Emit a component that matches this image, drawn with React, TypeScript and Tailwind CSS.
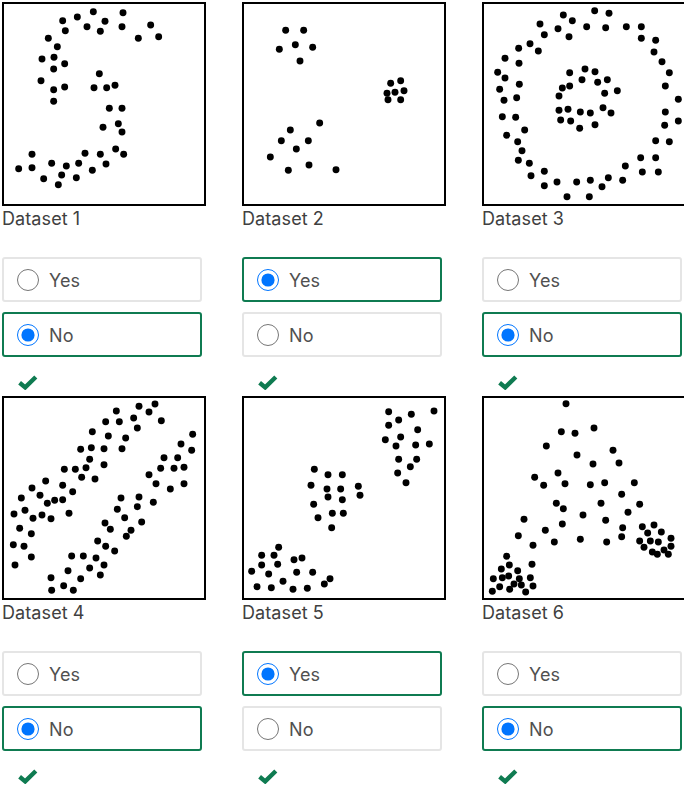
type Dot = [number, number];

// dot positions measured off the reference, in 3x units
const plots: { name: string; viewBox: string; selected: "Yes" | "No"; dots: Dot[] }[] = [
  {
    name: "Dataset 1",
    viewBox: "12 12 600 600",
    selected: "No",
    dots: [
      [280, 35], [369, 38], [232, 51], [188, 62], [315, 64], [261, 80], [366, 80], [452, 75], [196, 92], [301, 94],
      [415, 115], [476, 110], [145, 115], [172, 140], [126, 177], [162, 172], [194, 191], [161, 207], [298, 221], [123, 242],
      [345, 256], [282, 263], [320, 263], [161, 269], [194, 261], [161, 304], [328, 325], [366, 325], [355, 371], [309, 382],
      [366, 396], [347, 447], [371, 463], [96, 463], [255, 460], [301, 463], [155, 490], [236, 490], [199, 498], [318, 492],
      [56, 506], [96, 503], [277, 511], [185, 525], [131, 536], [229, 533], [175, 554],
    ],
  },
  {
    name: "Dataset 2",
    viewBox: "27 12 600 600",
    selected: "Yes",
    dots: [
      [152, 91], [206, 91], [181, 134], [133, 148], [233, 142], [195, 183], [467, 250], [497, 242], [507, 272], [480, 277],
      [456, 280], [459, 299], [497, 299], [254, 369], [166, 390], [139, 422], [220, 422], [184, 447], [106, 471], [222, 495],
      [160, 511], [303, 509],
    ],
  },
  {
    name: "Dataset 3",
    viewBox: "30 12 600 600",
    selected: "No",
    dots: [
      [362, 32], [405, 40], [268, 45], [295, 62], [198, 72], [338, 80], [395, 83], [457, 80], [502, 80], [252, 86],
      [211, 104], [285, 110], [502, 115], [545, 121], [168, 131], [134, 145], [193, 153], [540, 156], [93, 175], [564, 185],
      [135, 190], [71, 217], [93, 234], [586, 218], [136, 253], [574, 258], [77, 268], [128, 293], [90, 301], [613, 298],
      [574, 336], [85, 350], [125, 352], [613, 363], [572, 376], [152, 390], [98, 406], [131, 425], [545, 422], [586, 425],
      [144, 452], [500, 473], [545, 473], [133, 481], [166, 490], [454, 498], [211, 514], [505, 516], [553, 516], [171, 527],
      [403, 533], [349, 541], [446, 541], [249, 546], [308, 546], [211, 557], [384, 560], [279, 590], [346, 590], [333, 207],
      [363, 215], [287, 218], [324, 239], [400, 239], [371, 247], [287, 258], [265, 264], [430, 272], [392, 280], [255, 288],
      [387, 323], [255, 331], [282, 328], [319, 336], [349, 339], [411, 339], [260, 360], [290, 363], [363, 374], [317, 385],
    ],
  },
  {
    name: "Dataset 4",
    viewBox: "12 18 600 600",
    selected: "No",
    dots: [
      [465, 36], [417, 43], [349, 57], [447, 60], [401, 78], [317, 89], [358, 89], [484, 86], [412, 108], [277, 119],
      [578, 127], [325, 132], [377, 138], [543, 156], [242, 172], [274, 167], [312, 170], [366, 170], [575, 175], [492, 197],
      [533, 197], [269, 202], [312, 218], [193, 232], [226, 232], [258, 227], [482, 229], [522, 229], [552, 226], [447, 248],
      [245, 256], [285, 261], [137, 267], [468, 275], [552, 275], [188, 280], [96, 288], [511, 291], [218, 299], [120, 310],
      [64, 318], [164, 325], [188, 323], [363, 318], [417, 315], [460, 331], [142, 334], [75, 355], [352, 352], [412, 344],
      [42, 366], [207, 364], [126, 369], [99, 379], [153, 380], [374, 377], [425, 390], [315, 393], [59, 409], [331, 412],
      [393, 415], [94, 425], [379, 433], [293, 447], [40, 458], [72, 463], [317, 463], [344, 477], [94, 495], [215, 492],
      [250, 492], [288, 498], [45, 519], [312, 519], [269, 528], [204, 536], [301, 549], [153, 557], [242, 560], [191, 581],
      [155, 595], [220, 595],
    ],
  },
  {
    name: "Dataset 5",
    viewBox: "27 18 600 600",
    selected: "Yes",
    dots: [
      [461, 59], [597, 57], [529, 67], [491, 84], [461, 100], [548, 113], [497, 135], [451, 143], [483, 162], [542, 159],
      [583, 156], [491, 202], [545, 202], [526, 224], [488, 243], [513, 272], [238, 232], [279, 248], [322, 248], [228, 280],
      [370, 283], [276, 291], [317, 291], [375, 310], [279, 315], [322, 323], [236, 337], [292, 364], [325, 364], [249, 377],
      [290, 407], [131, 466], [80, 490], [117, 490], [201, 498], [177, 503], [80, 519], [128, 517], [50, 538], [101, 546],
      [185, 541], [233, 541], [285, 560], [144, 568], [268, 576], [66, 584], [109, 587], [174, 592], [217, 589],
    ],
  },
  {
    name: "Dataset 6",
    viewBox: "30 18 600 600",
    selected: "No",
    dots: [
      [276, 35], [360, 108], [262, 119], [303, 124], [217, 162], [417, 175], [309, 189], [357, 216], [435, 213], [252, 243],
      [182, 256], [209, 280], [273, 275], [349, 278], [392, 272], [481, 272], [443, 307], [247, 334], [268, 350], [381, 334],
      [497, 337], [462, 361], [327, 369], [150, 382], [395, 385], [265, 396], [214, 415], [446, 407], [505, 404], [540, 399],
      [521, 423], [562, 420], [133, 431], [443, 434], [319, 442], [241, 450], [398, 450], [497, 447], [529, 447], [553, 450],
      [591, 439], [591, 463], [177, 460], [510, 466], [570, 474], [535, 480], [550, 487], [583, 487], [98, 493], [174, 517],
      [106, 519], [82, 531], [131, 536], [104, 552], [85, 557], [58, 560], [136, 560], [169, 557], [120, 576], [142, 579],
      [177, 582], [77, 584], [107, 592], [55, 598], [155, 600],
    ],
  },
];

function Plot({ viewBox, dots }: { viewBox: string; dots: Dot[] }) {
  return (
    <div className="w-[204px] h-[204px] border-2 border-black bg-white overflow-hidden">
      <svg viewBox={viewBox} className="block w-full h-full">
        {dots.map(([cx, cy], i) => (
          <circle key={i} cx={cx} cy={cy} r="10.4" fill="#000" />
        ))}
      </svg>
    </div>
  );
}

function Option({ label, group, checked }: { label: string; group: string; checked: boolean }) {
  return (
    <label
      className={`flex items-center gap-[10px] w-[200px] h-[45px] pl-[13px] border-2 rounded-[3px] text-[#505050] ${
        checked ? "border-[#0f7b51]" : "border-[#e5e5e5]"
      }`}
    >
      <input type="radio" name={group} defaultChecked={checked} className="w-[22px] h-[22px] m-0 shrink-0" />
      <span className="pt-px">{label}</span>
    </label>
  );
}

function Card({ plot }: { plot: (typeof plots)[number] }) {
  return (
    <div className="w-[240px] h-[394px] shrink-0">
      <Plot viewBox={plot.viewBox} dots={plot.dots} />
      <div className="mt-px h-6 leading-6 text-[#404040]">{plot.name}</div>
      <div className="mt-[26px] flex flex-col gap-[10px]">
        <Option label="Yes" group={plot.name} checked={plot.selected === "Yes"} />
        <Option label="No" group={plot.name} checked={plot.selected === "No"} />
      </div>
      <svg viewBox="0 0 20 15" className="ml-4 mt-[18px] w-5 h-[15px]">
        <path d="M1.6 7.8 L7.2 12.4 L17.8 2" fill="none" stroke="#0f7b51" strokeWidth="4.4" />
      </svg>
    </div>
  );
}

export default function App() {
  return (
    <div className="w-[684px] h-[792px] overflow-hidden bg-white pl-[2px] pt-[2px] text-[18px] tracking-[0.005em] font-['Inter',sans-serif]">
      <div className="grid grid-cols-[240px_240px_240px]">
        {plots.map((p) => (
          <Card key={p.name} plot={p} />
        ))}
      </div>
    </div>
  );
}
